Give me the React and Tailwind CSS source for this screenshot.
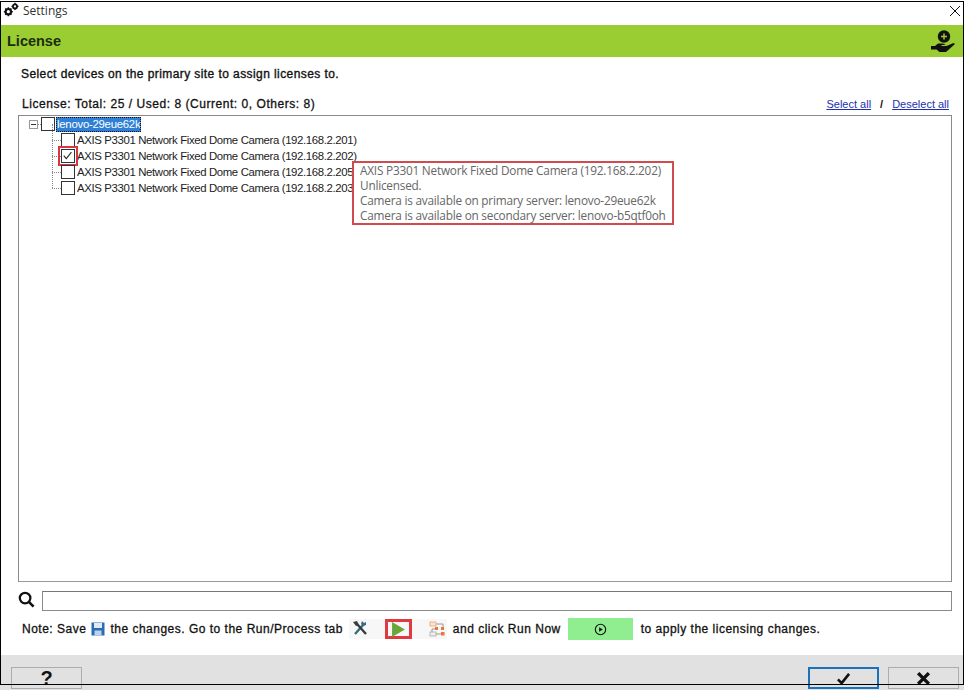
import React from "react";

const sans = "font-['Liberation_Sans',Arial,sans-serif]";

function Box({ checked, red }) {
  return (
    <span className={`relative block w-[14px] h-[14px] shrink-0 border border-[#333] bg-white ${red ? "outline-2 outline-[#d9373f] outline-offset-[1px]" : ""}`}>
      {checked && (
        <svg viewBox="0 0 14 14" className="absolute left-0 top-0 w-[12px] h-[12px]">
          <path d="M2 6.5 L5 10 L11 2.5" fill="none" stroke="#222" strokeWidth="1.2" />
        </svg>
      )}
    </span>
  );
}

function Row({ ip, checked, last, red }) {
  return (
    <div className="h-[16px] flex items-center relative pl-[33px]">
      <span className={`absolute left-[33px] top-[-8px] border-l border-dotted border-[#888] ${last ? "h-[16px]" : "h-[24px]"}`} />
      <span className="w-[9px] border-t border-dotted border-[#888] shrink-0" />
      <Box checked={checked} red={red} />
      <span className="ml-[2px] text-[11.4px] leading-[16px] text-[#222] whitespace-nowrap tracking-[-0.37px]">
        AXIS P3301 Network Fixed Dome Camera (192.168.2.{ip})
      </span>
    </div>
  );
}

function Gears() {
  return (
    <svg viewBox="0 0 18 16" className="w-[16px] h-[15px] shrink-0 mb-[6px]">
      <g fill="none" stroke="#111">
        <circle cx="6" cy="10.5" r="3" strokeWidth="2.4" />
        <circle cx="13.5" cy="4.5" r="2.3" strokeWidth="2" />
      </g>
      <g stroke="#111" strokeWidth="1.6">
        <path d="M6 5.5v2M6 13.5v2M1 10.5h2M9 10.5h2M2.5 7l1.4 1.4M8.1 12.6l1.4 1.4M2.5 14l1.4-1.4M8.1 8.4l1.4-1.4" />
        <path d="M13.5 0.5v1.5M13.5 7v1.5M9.5 4.5h1.5M16 4.5h1.5" />
      </g>
    </svg>
  );
}

function HandIcon() {
  return (
    <svg viewBox="0 0 26 26" className="w-[26px] h-[26px]">
      <circle cx="14" cy="8.5" r="6.2" fill="#111" />
      <path d="M14 5.5v6M11 8.5h6" stroke="#9acd32" strokeWidth="1.5" />
      <path d="M1 18h4l3-2.5h5l3 1.5h-4.5v1h5l7-3 1.5 1L16 24H9.5l-3-2.5H1z" fill="#111" />
    </svg>
  );
}

export default function App() {
  return (
    <div className={`relative w-[964px] h-[690px] overflow-hidden bg-white flex flex-col ${sans}`}>
      <div className="h-[25px] flex items-center pl-[3px] shrink-0">
        <Gears />
        <span className="ml-[4px] mb-[3px] text-[12px] text-[#333] font-['Open_Sans',sans-serif]">Settings</span>
        <svg viewBox="0 0 12 12" className="ml-auto mr-[3px] mb-[3px] w-[12px] h-[12px]">
          <path d="M1 1 L11 11 M11 1 L1 11" stroke="#111" strokeWidth="1" />
        </svg>
      </div>

      <div className="h-[32px] shrink-0 bg-[#9acd32] flex items-center justify-between pl-[7px] pr-[8px]">
        <span className="pt-[1px] text-[14.5px] font-bold text-[#1c2c10]">License</span>
        <HandIcon />
      </div>

      <div className="flex-1 min-h-0 flex flex-col pl-[18px] pr-[12px]">
        <div className="mt-[9px] ml-[3px] h-[16px] text-[12px] leading-[16px] text-[#111] [-webkit-text-stroke:0.35px_#111] tracking-[0.42px] whitespace-nowrap">
          Select devices on the primary site to assign licenses to.
        </div>
        <div className="mt-[14px] ml-[4px] h-[16px] flex items-center justify-between pr-[3px] leading-[16px]">
          <span className="text-[12px] text-[#111] [-webkit-text-stroke:0.3px_#111] tracking-[0.54px]">License: Total: 25 / Used: 8 (Current: 0, Others: 8)</span>
          <span className="flex items-center text-[11px]">
            <span className="text-[#1c30b0] underline">Select all</span>
            <span className="mx-[9px] font-bold text-[#111]">/</span>
            <span className="text-[#1c30b0] underline">Deselect all</span>
          </span>
        </div>

        <div className="relative mt-[3px] h-[467px] shrink-0 border border-[#8a8a8a] border-b-[#999]">
          <div className="flex flex-col">
            <div className="h-[16px] flex items-center pl-[10px]">
              <span className="relative w-[9px] h-[9px] border border-[#999] shrink-0 flex items-center justify-center">
                <span className="w-[5px] h-[1px] bg-[#333]" />
              </span>
              <span className="w-[3px] border-t border-dotted border-[#888] shrink-0" />
              <Box />
              <span className="ml-[1px] h-[15px] px-[1px] bg-[#2f7fd6] text-white text-[11.4px] leading-[15px] tracking-[-0.27px] outline-1 outline-dotted outline-[#111] outline-offset-[-1px]">
                lenovo-29eue62k
              </span>
            </div>
            <Row ip="201" />
            <Row ip="202" checked red />
            <Row ip="205" />
            <Row ip="203" last />
          </div>

          <div className="absolute left-[333px] top-[45px] w-[322px] h-[64px] bg-white border-2 border-[#d04a4f] pl-[6px] text-[11.8px] leading-[15px] text-[#666] whitespace-nowrap font-['Open_Sans',sans-serif] tracking-[-0.22px]">
            <div>AXIS P3301 Network Fixed Dome Camera (192.168.2.202)</div>
            <div>Unlicensed.</div>
            <div>Camera is available on primary server: lenovo-29eue62k</div>
            <div>Camera is available on secondary server: lenovo-b5qtf0oh</div>
          </div>
        </div>

        <div className="mt-[9px] h-[21px] flex items-start shrink-0">
          <svg viewBox="0 0 18 18" className="w-[17px] h-[17px] shrink-0">
            <circle cx="7.5" cy="7.5" r="5.6" fill="none" stroke="#111" strokeWidth="2.4" />
            <path d="M11.5 11.5 L16.5 16.5" stroke="#111" strokeWidth="2.8" />
          </svg>
          <div className="ml-[7px] flex-1 h-[20px] border border-[#8a8a8a] border-t-[#777]" />
        </div>

        <div className="mt-[5px] ml-[4px] h-[24px] flex items-center text-[12px] text-[#111] whitespace-nowrap [-webkit-text-stroke:0.3px_#111] tracking-[0.5px]">
          <span>Note: Save</span>
          <svg viewBox="0 0 14 14" className="ml-[5px] w-[14px] h-[14px] shrink-0">
            <rect x="0.5" y="0.5" width="13" height="13" fill="#2a6db5" />
            <rect x="3" y="1" width="8" height="5" fill="#dfeaf5" />
            <rect x="3.5" y="8.5" width="7" height="5" fill="#bcd3e8" />
          </svg>
          <span className="ml-[5px]">the changes. Go to the Run/Process tab</span>
          <span className="ml-[6px] h-[20px] w-[98px] bg-[#f7f7f7] flex items-center shrink-0">
            <svg viewBox="0 0 16 16" className="ml-[3px] mb-[3px] w-[16px] h-[16px] shrink-0">
              <path d="M3 14 L12 4" stroke="#2f6f7f" strokeWidth="2.4" />
              <path d="M14 14 L5 4" stroke="#3c3c3c" strokeWidth="2.4" />
              <path d="M9 4 L10 1 L12 3 L14 2 L14 5 L11 6z" fill="#2f6f7f" />
              <path d="M1 2 L5 1 L7 5 L4 6z" fill="#3c3c3c" />
            </svg>
            <span className="ml-[17px] w-[27px] h-[20px] border-[3px] border-[#e0393f] flex items-center justify-center shrink-0">
              <svg viewBox="0 0 12 14" className="w-[13px] h-[15px] shrink-0">
                <path d="M0 0 L12 7 L0 14z" fill="#6aa63a" />
              </svg>
            </span>
            <svg viewBox="0 0 16 16" className="ml-[17px] w-[16px] h-[16px] shrink-0">
              <path d="M7 3h7v3M9 8H3v3" fill="none" stroke="#999" />
              <rect x="1" y="1" width="6" height="4" fill="#fbe3d3" stroke="#e8a27a" strokeWidth="0.8" />
              <rect x="6" y="6" width="3" height="3" fill="#e8763f" />
              <rect x="12" y="6" width="3" height="3" fill="#e8763f" />
              <rect x="1" y="11" width="6" height="4" fill="#eee" stroke="#aaa" strokeWidth="0.8" />
              <rect x="12" y="11" width="3.5" height="3.5" fill="#e8763f" />
              <path d="M7 13h5" stroke="#999" />
            </svg>
          </span>
          <span className="ml-[6px]">and click Run Now</span>
          <span className="ml-[7px] w-[65px] h-[22px] bg-[#90ee90] flex items-center justify-center shrink-0">
            <svg viewBox="0 0 14 14" className="w-[13px] h-[13px]">
              <circle cx="7" cy="7" r="5.6" fill="none" stroke="#111" strokeWidth="1.2" />
              <path d="M5.5 4.5 L9.5 7 L5.5 9.5z" fill="#111" />
            </svg>
          </span>
          <span className="ml-[8px]">to apply the licensing changes.</span>
        </div>
      </div>

      <div className="h-[35px] shrink-0 bg-[#e1e1e1] flex items-start justify-between pl-[11px] pr-[5px] pt-[12px]">
        <div className="w-[71px] h-[22px] border border-[#adadad] flex items-center justify-center">
          <span className="text-[20px] leading-[20px] font-bold text-[#111]">?</span>
        </div>
        <div className="flex gap-[9px]">
          <div className="w-[71px] h-[22px] border-2 border-[#1b72ba] flex items-center justify-center">
            <svg viewBox="0 0 16 14" className="w-[15px] h-[13px]">
              <path d="M2 8 L6 12 L14 2" fill="none" stroke="#111" strokeWidth="2.8" />
            </svg>
          </div>
          <div className="w-[71px] h-[22px] border border-[#adadad] flex items-center justify-center">
            <svg viewBox="0 0 14 14" className="w-[15px] h-[15px]">
              <path d="M2 2 L12 12 M12 2 L2 12" stroke="#111" strokeWidth="3.2" />
            </svg>
          </div>
        </div>
      </div>

      <div className="absolute left-0 top-[1px] w-[964px] h-[684px] border border-black pointer-events-none" />
    </div>
  );
}
